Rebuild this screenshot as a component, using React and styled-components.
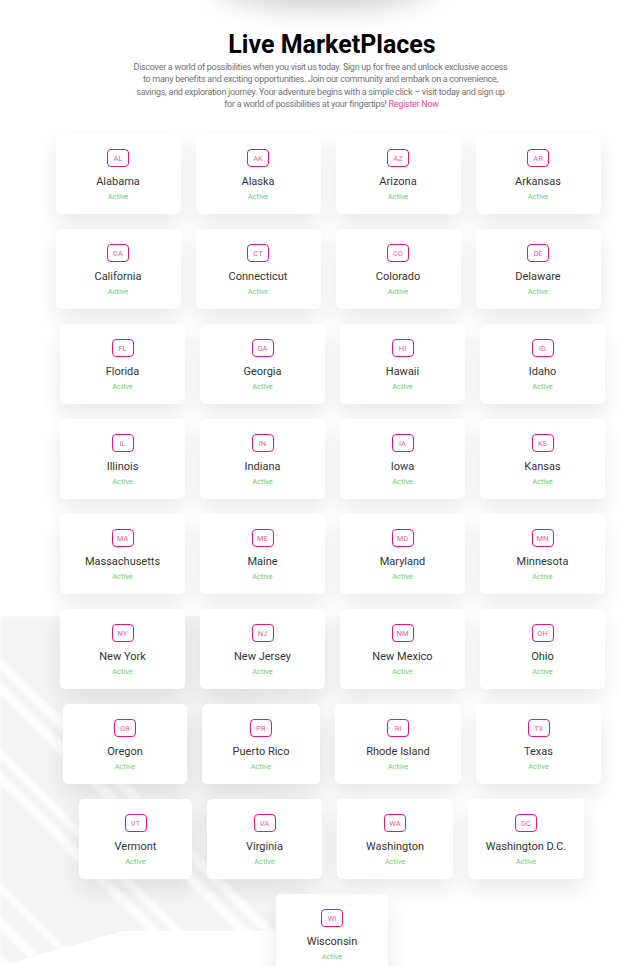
import React from "react";
import styled, { createGlobalStyle } from "styled-components";

const GlobalStyle = createGlobalStyle`
  html, body {
    margin: 0;
    padding: 0;
    background: #ffffff;
    overflow: hidden;
  }
  body {
    font-family: Roboto, "Noto Sans", Arial, sans-serif;
  }
`;

const Page = styled.div`
  position: relative;
  width: 641px;
  height: 966px;
  overflow: hidden;
  background: #ffffff;
`;

const TopGlow = styled.div`
  position: absolute;
  left: 215px;
  top: -48px;
  width: 220px;
  height: 56px;
  border-radius: 50%;
  background: rgba(0, 0, 0, 0.2);
  filter: blur(14px);
`;

/* light grey striped backdrop behind the lower-left cards */
const Backdrop = styled.div`
  position: absolute;
  left: 0;
  top: 616px;
  width: 440px;
  height: 350px;
  background:
    linear-gradient(
      45deg,
      rgba(255, 255, 255, 0.75) 0 10px,
      transparent 10px 26px,
      rgba(255, 255, 255, 0.75) 26px 36px,
      transparent 36px 52px,
      rgba(255, 255, 255, 0.75) 52px 60px,
      transparent 60px 128px,
      rgba(255, 255, 255, 0.8) 128px 138px,
      transparent 138px 146px,
      rgba(255, 255, 255, 0.8) 146px 154px,
      transparent 154px 192px,
      rgba(255, 255, 255, 0.85) 192px 202px,
      transparent 202px 210px,
      rgba(255, 255, 255, 0.85) 210px 219px,
      transparent 219px
    ),
    #f4f4f4;
  filter: blur(1.2px);
  clip-path: polygon(0 0, 100% 0, 100% 90%, 28% 90%, 0 100%);
  -webkit-mask-image: linear-gradient(90deg, #000 58%, transparent 88%);
  mask-image: linear-gradient(90deg, #000 58%, transparent 88%);
`;

const Content = styled.div`
  position: relative;
  display: flex;
  flex-direction: column;
  align-items: center;
`;

const Title = styled.h1`
  margin: 30px 0 0;
  padding-left: 23px;
  font-family: Roboto, Arial, sans-serif;
  font-weight: 700;
  font-size: 25px;
  line-height: 29px;
  color: #000;
`;

const Intro = styled.p`
  margin: 2px 0 0;
  font-family: Roboto, Arial, sans-serif;
  font-size: 9px;
  letter-spacing: -0.28px;
  line-height: 12.3px;
  color: #727272;
  text-align: center;
  white-space: nowrap;
`;

const LastLine = styled.span`
  padding-left: 22px;
`;

const Register = styled.a`
  color: #f0479a;
  text-decoration: none;
`;

const Grid = styled.div`
  display: flex;
  flex-direction: column;
  gap: 15px;
  width: 100%;
  margin-top: 24px;
`;

const Row = styled.div`
  display: flex;
  justify-content: center;
  gap: 15px;
  padding-left: ${(p) => p.$shift}px;
`;

const Card = styled.div`
  flex: none;
  width: ${(p) => p.$width}px;
  height: 80px;
  box-sizing: border-box;
  padding-top: 15px;
  display: flex;
  flex-direction: column;
  align-items: center;
  background: #ffffff;
  border-radius: 5px;
  box-shadow: 0 10px 22px rgba(0, 0, 0, 0.09);
`;

const Badge = styled.span`
  box-sizing: border-box;
  min-width: 22px;
  height: 18px;
  padding: 0 4px;
  display: flex;
  align-items: center;
  justify-content: center;
  border: 1.5px solid #dc1a7c;
  border-radius: 4px;
  font-size: 7.5px;
  color: #ee5aa0;
`;

const StateName = styled.div`
  margin-top: 8px;
  font-size: 11px;
  line-height: 14px;
  color: #333333;
`;

const Status = styled.div`
  margin-top: 2px;
  font-size: 7.5px;
  line-height: 12px;
  color: #6ccc72;
`;

const rows = [
  { shift: 15, widths: [125, 125, 125, 125], states: [["AL", "Alabama"], ["AK", "Alaska"], ["AZ", "Arizona"], ["AR", "Arkansas"]] },
  { shift: 15, widths: [125, 125, 125, 125], states: [["CA", "California"], ["CT", "Connecticut"], ["CO", "Colorado"], ["DE", "Delaware"]] },
  { shift: 24, widths: [125, 125, 125, 125], states: [["FL", "Florida"], ["GA", "Georgia"], ["HI", "Hawaii"], ["ID", "Idaho"]] },
  { shift: 24, widths: [125, 125, 125, 125], states: [["IL", "Illinois"], ["IN", "Indiana"], ["IA", "Iowa"], ["KS", "Kansas"]] },
  { shift: 24, widths: [125, 125, 125, 125], states: [["MA", "Massachusetts"], ["ME", "Maine"], ["MD", "Maryland"], ["MN", "Minnesota"]] },
  { shift: 24, widths: [125, 125, 125, 125], states: [["NY", "New York"], ["NJ", "New Jersey"], ["NM", "New Mexico"], ["OH", "Ohio"]] },
  { shift: 23, widths: [124, 118, 126, 125], states: [["OR", "Oregon"], ["PR", "Puerto Rico"], ["RI", "Rhode Island"], ["TX", "Texas"]] },
  { shift: 22, widths: [113, 115, 116, 116], states: [["VT", "Vermont"], ["VA", "Virginia"], ["WA", "Washington"], ["DC", "Washington D.C."]] },
  { shift: 23, widths: [112], states: [["WI", "Wisconsin"]] },
];

export default function App() {
  return (
    <>
      <GlobalStyle />
      <Page>
        <TopGlow />
        <Backdrop />
        <Content>
          <Title>Live MarketPlaces</Title>
          <Intro>
            Discover a world of possibilities when you visit us today. Sign up for free and unlock exclusive access
            <br />
            to many benefits and exciting opportunities. Join our community and embark on a convenience,
            <br />
            savings, and exploration journey. Your adventure begins with a simple click – visit today and sign up
            <br />
            <LastLine>
              for a world of possibilities at your fingertips! <Register href="#">Register Now</Register>
            </LastLine>
          </Intro>
          <Grid>
            {rows.map((row, i) => (
              <Row key={i} $shift={row.shift}>
                {row.states.map(([code, name], j) => (
                  <Card key={code} $width={row.widths[j]}>
                    <Badge>{code}</Badge>
                    <StateName>{name}</StateName>
                    <Status>Active</Status>
                  </Card>
                ))}
              </Row>
            ))}
          </Grid>
        </Content>
      </Page>
    </>
  );
}
